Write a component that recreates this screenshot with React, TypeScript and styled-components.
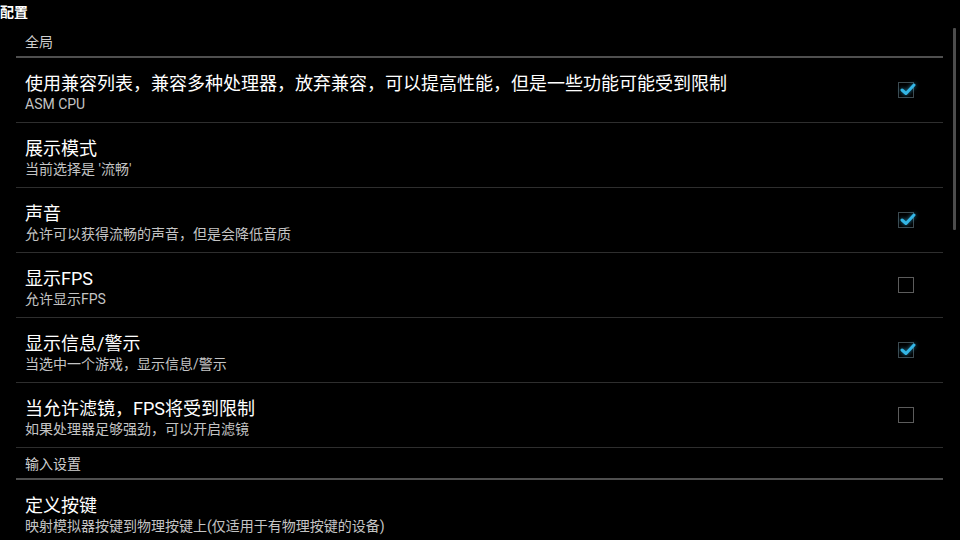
import * as React from 'react';
import styled, { createGlobalStyle } from 'styled-components';

const GlobalStyle = createGlobalStyle`
    html, body {
        margin: 0;
        padding: 0;
        background: #000;
        overflow: hidden;
    }
    body {
        font-family: Roboto, 'Noto Sans CJK SC', sans-serif;
        color: #fff;
    }
`;

const Screen = styled.div`
    width: 960px;
    height: 540px;
    background: #000;
    display: flex;
    flex-direction: column;
    overflow: hidden;
`;

const TitleBar = styled.div`
    height: 26px;
    line-height: 24px;
    font-size: 14px;
    font-weight: bold;
    color: #fff;
    flex-shrink: 0;
`;

const PrefList = styled.div`
    position: relative;
    flex: 1;
    padding: 0 17px 0 16px;
`;

const ScrollThumb = styled.div`
    position: absolute;
    right: 4px;
    top: 2px;
    width: 3px;
    height: 202px;
    background: #4c4c4c;
    border-radius: 1px;
`;

const Category = styled.div`
    padding: 4px 0 0 9px;
    height: 26px;
    line-height: 24px;
    font-size: 14px;
    color: #cfcfcf;
    border-bottom: 2px solid #4f4f4f;
`;

const Row = styled.div`
    height: 64px;
    display: flex;
    align-items: center;
    border-bottom: 1px solid #2e2e2e;
    &:last-child {
        border-bottom: none;
    }
`;

const RowText = styled.div`
    flex: 1;
    padding: 15px 0 0 9px;
    align-self: stretch;
    box-sizing: border-box;
`;

const RowTitle = styled.div`
    font-size: 18px;
    line-height: 22px;
    color: #fff;
    white-space: nowrap;
`;

const RowSummary = styled.div`
    font-size: 14px;
    line-height: 18px;
    color: #c4c4c4;
    white-space: nowrap;
`;

const CheckBox = styled.div<{ $checked: boolean }>`
    position: relative;
    width: 14px;
    height: 14px;
    margin-right: 29px;
    border: 1px solid ${p => (p.$checked ? '#3c4a50' : '#5c5c5c')};
    flex-shrink: 0;
`;

const Tick = styled.svg`
    position: absolute;
    left: 0px;
    top: -2px;
    width: 18px;
    height: 16px;
    overflow: visible;
    filter: drop-shadow(0 0 2px rgba(51, 181, 229, 0.7));
`;

interface Pref {
    title: string;
    summary: string;
    checked?: boolean;
}

const globalPrefs: Pref[] = [
    { title: '使用兼容列表，兼容多种处理器，放弃兼容，可以提高性能，但是一些功能可能受到限制', summary: 'ASM CPU', checked: true },
    { title: '展示模式', summary: "当前选择是 '流畅'" },
    { title: '声音', summary: '允许可以获得流畅的声音，但是会降低音质', checked: true },
    { title: '显示FPS', summary: '允许显示FPS', checked: false },
    { title: '显示信息/警示', summary: '当选中一个游戏，显示信息/警示', checked: true },
    { title: '当允许滤镜，FPS将受到限制', summary: '如果处理器足够强劲，可以开启滤镜', checked: false },
];

const inputPrefs: Pref[] = [
    { title: '定义按键', summary: '映射模拟器按键到物理按键上(仅适用于有物理按键的设备)' },
];

const PrefRow = ({ pref }: { pref: Pref }) => (
    <Row>
        <RowText>
            <RowTitle>{pref.title}</RowTitle>
            <RowSummary>{pref.summary}</RowSummary>
        </RowText>
        {pref.checked !== undefined && (
            <CheckBox $checked={pref.checked}>
                {pref.checked && (
                    <Tick viewBox="0 0 18 16">
                        <path d="M3 9 L7 12.5 L15 4" fill="none" stroke="#33b5e5"
                              strokeWidth="3" strokeLinecap="round" strokeLinejoin="round" />
                    </Tick>
                )}
            </CheckBox>
        )}
    </Row>
);

export default function App() {
    return (
        <Screen>
            <GlobalStyle />
            <TitleBar>配置</TitleBar>
            <PrefList>
                <Category>全局</Category>
                {globalPrefs.map((p, i) => <PrefRow key={i} pref={p} />)}
                <Category>输入设置</Category>
                {inputPrefs.map((p, i) => <PrefRow key={i} pref={p} />)}
                <ScrollThumb />
            </PrefList>
        </Screen>
    );
}
